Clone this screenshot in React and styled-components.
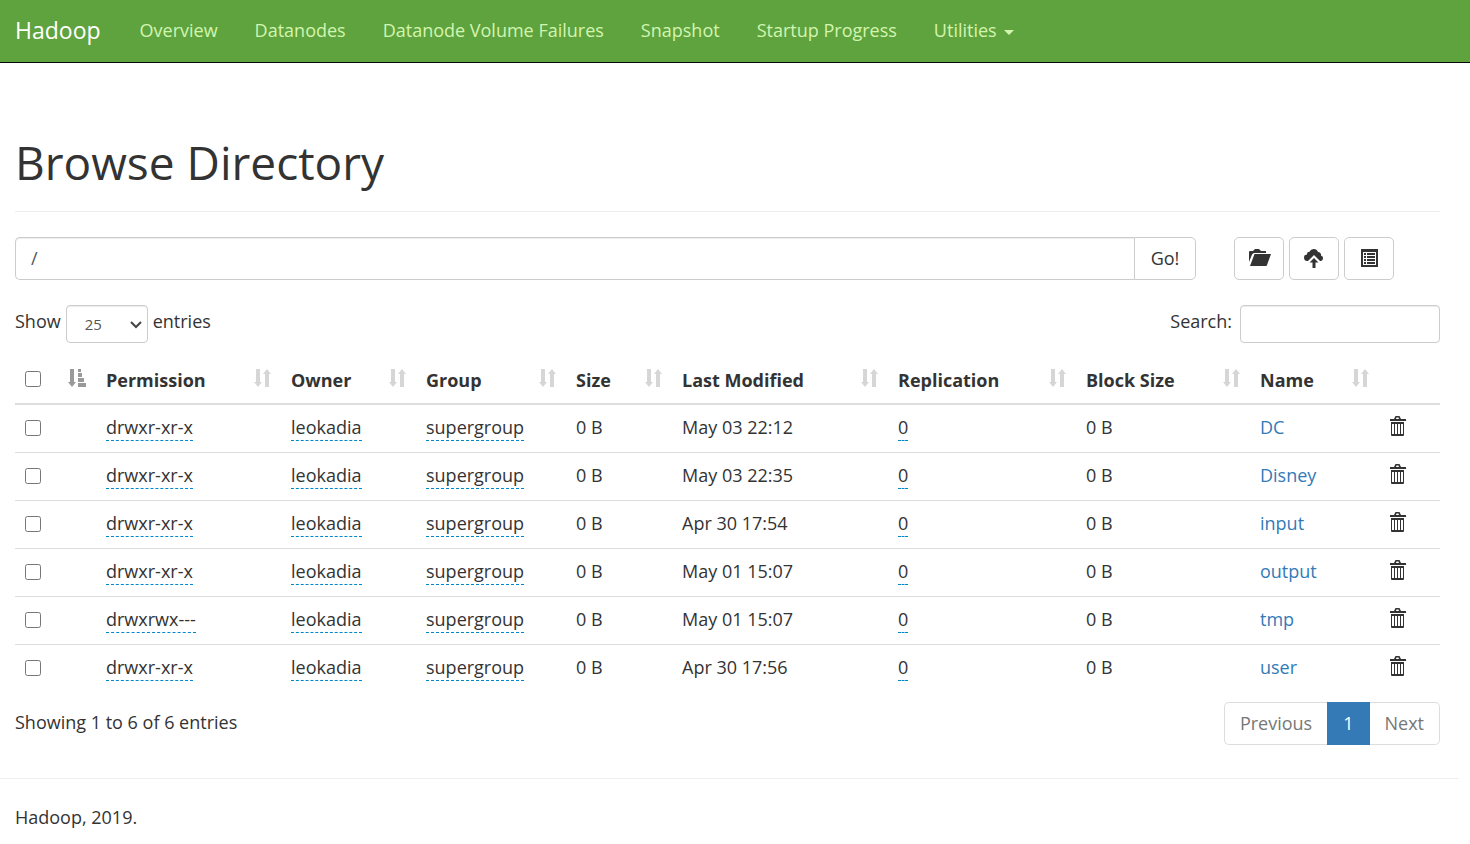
import styled, { createGlobalStyle } from 'styled-components'

const GlobalStyle = createGlobalStyle`
  * {
    box-sizing: border-box;
  }

  body {
    margin: 0;
    background: #fff;
    color: #333;
    font-family: "Open Sans", sans-serif;
    font-size: 18px;
    line-height: 27px;
  }

  button, input, select {
    font-family: inherit;
    margin: 0;
  }
`

const Navbar = styled.nav`
  display: flex;
  align-items: center;
  height: 63px;
  padding: 0 15px 2px;
  background: #5fa33e;
  border-bottom: 1px solid #080808;
`

const Brand = styled.a`
  margin-right: 39px;
  color: #fff;
  font-size: 23px;
  font-weight: 500;
  text-decoration: none;
`

const NavList = styled.ul`
  display: flex;
  gap: 37px;
  margin: 0;
  padding: 0;
  list-style: none;
`

const NavLink = styled.a`
  display: flex;
  align-items: center;
  gap: 7px;
  color: #d2f5b0;
  text-decoration: none;
`

const Caret = styled.span`
  margin-top: 4px;
  border: 5px solid transparent;
  border-top-color: #d2f5b0;
  border-bottom: 0;
`

const Container = styled.main`
  padding: 66px 30px 33px 15px;
`

const Title = styled.h1`
  margin: 0;
  padding-bottom: 16px;
  border-bottom: 1px solid #eee;
  font-size: 46px;
  font-weight: 400;
  line-height: 66px;
`

const PathBar = styled.form`
  display: flex;
  gap: 38px;
  margin-top: 25px;
`

const PathGroup = styled.div`
  display: flex;
  flex: 1;
`

const PathInput = styled.input`
  flex: 1;
  min-width: 0;
  height: 43px;
  padding: 0 15px 2px;
  border: 1px solid #ccc;
  border-right: 0;
  border-radius: 5px 0 0 5px;
  box-shadow: inset 0 1px 1px rgba(0, 0, 0, .075);
  color: #555;
  font-size: 18px;
`

const Button = styled.button`
  display: flex;
  align-items: center;
  justify-content: center;
  width: ${(props) => props.$width || '50px'};
  height: 43px;
  padding: 0 0 2px;
  border: 1px solid #ccc;
  border-radius: ${(props) => props.$radius || '5px'};
  background: #fff;
  color: #333;
  font-size: 18px;
`

const Actions = styled.div`
  display: flex;
  flex: 0 0 206px;
  gap: 5px;
`

const Controls = styled.div`
  display: flex;
  justify-content: space-between;
  margin-top: 25px;
`

const ControlLabel = styled.label`
  display: flex;
  gap: 5px;
  line-height: 33px;
`

const SelectWrap = styled.span`
  position: relative;
  display: flex;

  svg {
    position: absolute;
    top: 16px;
    right: 6px;
    pointer-events: none;
  }
`

const Select = styled.select`
  appearance: none;
  width: 82px;
  height: 38px;
  padding: 0 18px;
  border: 1px solid #ccc;
  border-radius: 4px;
  background: #fff;
  box-shadow: inset 0 1px 1px rgba(0, 0, 0, .075);
  color: #555;
  font-size: 15px;
`

const SearchInput = styled.input`
  width: 200px;
  height: 38px;
  margin-left: 3px;
  padding: 0 12px;
  border: 1px solid #ccc;
  border-radius: 4px;
  box-shadow: inset 0 1px 1px rgba(0, 0, 0, .075);
  font-size: 15px;
`

const Table = styled.table`
  width: 100%;
  margin-top: 13px;
  border-collapse: separate;
  border-spacing: 0;
  table-layout: fixed;
`

const Th = styled.th`
  height: 49px;
  padding: 2px 10px 0;
  border-bottom: 2px solid #ddd;
  text-align: left;
  font-weight: 700;
`

const HeadCell = styled.div`
  display: flex;
  align-items: center;
  justify-content: space-between;

  input {
    margin-bottom: 4px;
  }

  svg {
    margin-bottom: 5px;
  }
`

const Td = styled.td`
  height: 48px;
  padding: 0 10px 2px;
  border-bottom: 1px solid #ddd;

  tr:last-child & {
    border-bottom-color: transparent;
  }
`

const Checkbox = styled.input`
  display: block;
  width: 16px;
  height: 16px;
`

const Editable = styled.span`
  display: inline-block;
  border-bottom: 1px dashed #08c;
  line-height: 26px;
`

const FileLink = styled.a`
  color: #337ab7;
  text-decoration: none;
`

const TrashButton = styled.button`
  display: block;
  padding: 0 0 3px;
  border: 0;
  background: none;
  color: #333;

  svg {
    display: block;
  }
`

const TableFooter = styled.div`
  display: flex;
  justify-content: space-between;
  margin-top: 9px;
  line-height: 41px;
`

const Pagination = styled.div`
  display: flex;
  height: 43px;
`

const PageButton = styled.button`
  padding: 0 15px 2px;
  border: 1px solid ${(props) => (props.$active ? '#337ab7' : '#ddd')};
  border-left-width: ${(props) => (props.$first || props.$active ? '1px' : '0')};
  border-right-width: ${(props) => (props.$first ? '0' : '1px')};
  border-radius: ${(props) => props.$radius || '0'};
  background: ${(props) => (props.$active ? '#337ab7' : '#fff')};
  color: ${(props) => (props.$active ? '#fff' : '#777')};
  font-size: 18px;
`

const Footer = styled.footer`
  margin-right: 11px;
  padding: 25px 15px 13px;
  border-top: 1px solid #eee;
`

const FolderIcon = () => (
  <svg width="24" height="20" viewBox="0 0 24 20" fill="currentColor">
    <path d="M2 14V4q0-1 1-1h3l2-2h4l2 2h5v2H7q-1 0-2 1.500z" />
    <path d="M7.500 6H24l-4 11q0 1-1 1H3z" />
  </svg>
)

const UploadIcon = () => (
  <svg width="20" height="20" viewBox="0 0 20 20" fill="currentColor">
    <path d="M3.500 13A3.200 3.200 0 0 1 3 6.600a2.500 2.500 0 0 1 2.500-2.800A4.600 4.600 0 0 1 14 4a3.300 3.300 0 0 1 3 3.600A2.800 2.800 0 0 1 17 13h-1L10 7l-6 6z" />
    <path d="M10 10l4.500 4.500h-3V20h-3v-5.500h-3z" />
  </svg>
)

const ListIcon = () => (
  <svg width="17" height="18" viewBox="0 0 17 18" fill="currentColor">
    <path fillRule="evenodd" d="M0 0h17v18H0zM2 3v13h13V3z" />
    <path d="M3 4h2v2H3zM3 7h2v2H3zM3 10h2v2H3zM3 13h2v2H3zM6 4h8v2H6zM6 7h8v2H6zM6 10h8v2H6zM6 13h8v2H6z" />
  </svg>
)

const SortIcon = () => (
  <svg width="17" height="18" viewBox="0 0 17 18" fill="#d6d6d6">
    <path d="M2 0h4v13h2l-4 5-4-5h2z" />
    <path d="M11 18h4V5h2l-4-5-4 5h2z" />
  </svg>
)

const SortAscIcon = () => (
  <svg width="18" height="18" viewBox="0 0 18 18" fill="#999">
    <path d="M2 0h4v13h2l-4 5-4-5h2z" />
    <path d="M10 0h3v3h-3zM10 4h4v4h-4zM10 9h6v4h-6zM10 14h8v4h-8z" />
  </svg>
)

const TrashIcon = () => (
  <svg width="17" height="20" viewBox="0 0 17 20" fill="currentColor">
    <path fillRule="evenodd" d="M1 3h4l1-2q0-1 1-1h3q1 0 1 1l1 2h5v2H1zM7 3h3l-.5-1.500h-2z" />
    <path fillRule="evenodd" d="M2 6h13v13q0 1-1 1H3q-1 0-1-1zM3 8v10h2V8zM6 8v10h2V8zM9 8v10h2V8zM12 8v10h2V8z" />
  </svg>
)

const navItems = ['Overview', 'Datanodes', 'Datanode Volume Failures', 'Snapshot', 'Startup Progress']

const headers = ['Permission', 'Owner', 'Group', 'Size', 'Last Modified', 'Replication', 'Block Size', 'Name']

const colWidths = [81, 185, 135, 150, 106, 216, 188, 174, 129, 61]

const files = [
  { name: 'DC', permission: 'drwxr-xr-x', modified: 'May 03 22:12' },
  { name: 'Disney', permission: 'drwxr-xr-x', modified: 'May 03 22:35' },
  { name: 'input', permission: 'drwxr-xr-x', modified: 'Apr 30 17:54' },
  { name: 'output', permission: 'drwxr-xr-x', modified: 'May 01 15:07' },
  { name: 'tmp', permission: 'drwxrwx---', modified: 'May 01 15:07' },
  { name: 'user', permission: 'drwxr-xr-x', modified: 'Apr 30 17:56' },
]

const App = () => {
  return (
    <>
      <GlobalStyle />
      <Navbar>
        <Brand href="#">Hadoop</Brand>
        <NavList>
          {navItems.map((item) => (
            <li key={item}><NavLink href="#">{item}</NavLink></li>
          ))}
          <li><NavLink href="#">Utilities <Caret /></NavLink></li>
        </NavList>
      </Navbar>

      <Container>
        <Title>Browse Directory</Title>

        <PathBar onSubmit={(e) => e.preventDefault()}>
          <PathGroup>
            <PathInput aria-label="Directory" defaultValue="/" />
            <Button type="submit" $width="62px" $radius="0 5px 5px 0">Go!</Button>
          </PathGroup>
          <Actions>
            <Button type="button" aria-label="Create directory"><FolderIcon /></Button>
            <Button type="button" aria-label="Upload files"><UploadIcon /></Button>
            <Button type="button" aria-label="Cut and paste"><ListIcon /></Button>
          </Actions>
        </PathBar>

        <Controls>
          <ControlLabel>
            Show
            <SelectWrap>
              <Select defaultValue="25">
                <option>25</option>
                <option>50</option>
                <option>100</option>
              </Select>
              <svg width="12" height="8" viewBox="0 0 12 8" fill="none" stroke="#444" strokeWidth="2">
                <path d="M1 1l5 5 5-5" />
              </svg>
            </SelectWrap>
            entries
          </ControlLabel>
          <ControlLabel>
            Search:
            <SearchInput type="search" />
          </ControlLabel>
        </Controls>

        <Table>
          <colgroup>
            {colWidths.map((w, i) => <col key={i} width={w} />)}
          </colgroup>
          <thead>
            <tr>
              <Th>
                <HeadCell><Checkbox type="checkbox" aria-label="Select all" /><SortAscIcon /></HeadCell>
              </Th>
              {headers.map((header) => (
                <Th key={header}><HeadCell>{header}<SortIcon /></HeadCell></Th>
              ))}
              <Th />
            </tr>
          </thead>
          <tbody>
            {files.map((file) => (
              <tr key={file.name}>
                <Td><Checkbox type="checkbox" aria-label={'Select ' + file.name} /></Td>
                <Td><Editable>{file.permission}</Editable></Td>
                <Td><Editable>leokadia</Editable></Td>
                <Td><Editable>supergroup</Editable></Td>
                <Td>0 B</Td>
                <Td>{file.modified}</Td>
                <Td><Editable>0</Editable></Td>
                <Td>0 B</Td>
                <Td><FileLink href="#">{file.name}</FileLink></Td>
                <Td><TrashButton aria-label={'Delete ' + file.name}><TrashIcon /></TrashButton></Td>
              </tr>
            ))}
          </tbody>
        </Table>

        <TableFooter>
          <span>Showing 1 to 6 of 6 entries</span>
          <Pagination>
            <PageButton $first $radius="5px 0 0 5px">Previous</PageButton>
            <PageButton $active>1</PageButton>
            <PageButton $radius="0 5px 5px 0">Next</PageButton>
          </Pagination>
        </TableFooter>
      </Container>

      <Footer>Hadoop, 2019.</Footer>
    </>
  )
}

export default App
